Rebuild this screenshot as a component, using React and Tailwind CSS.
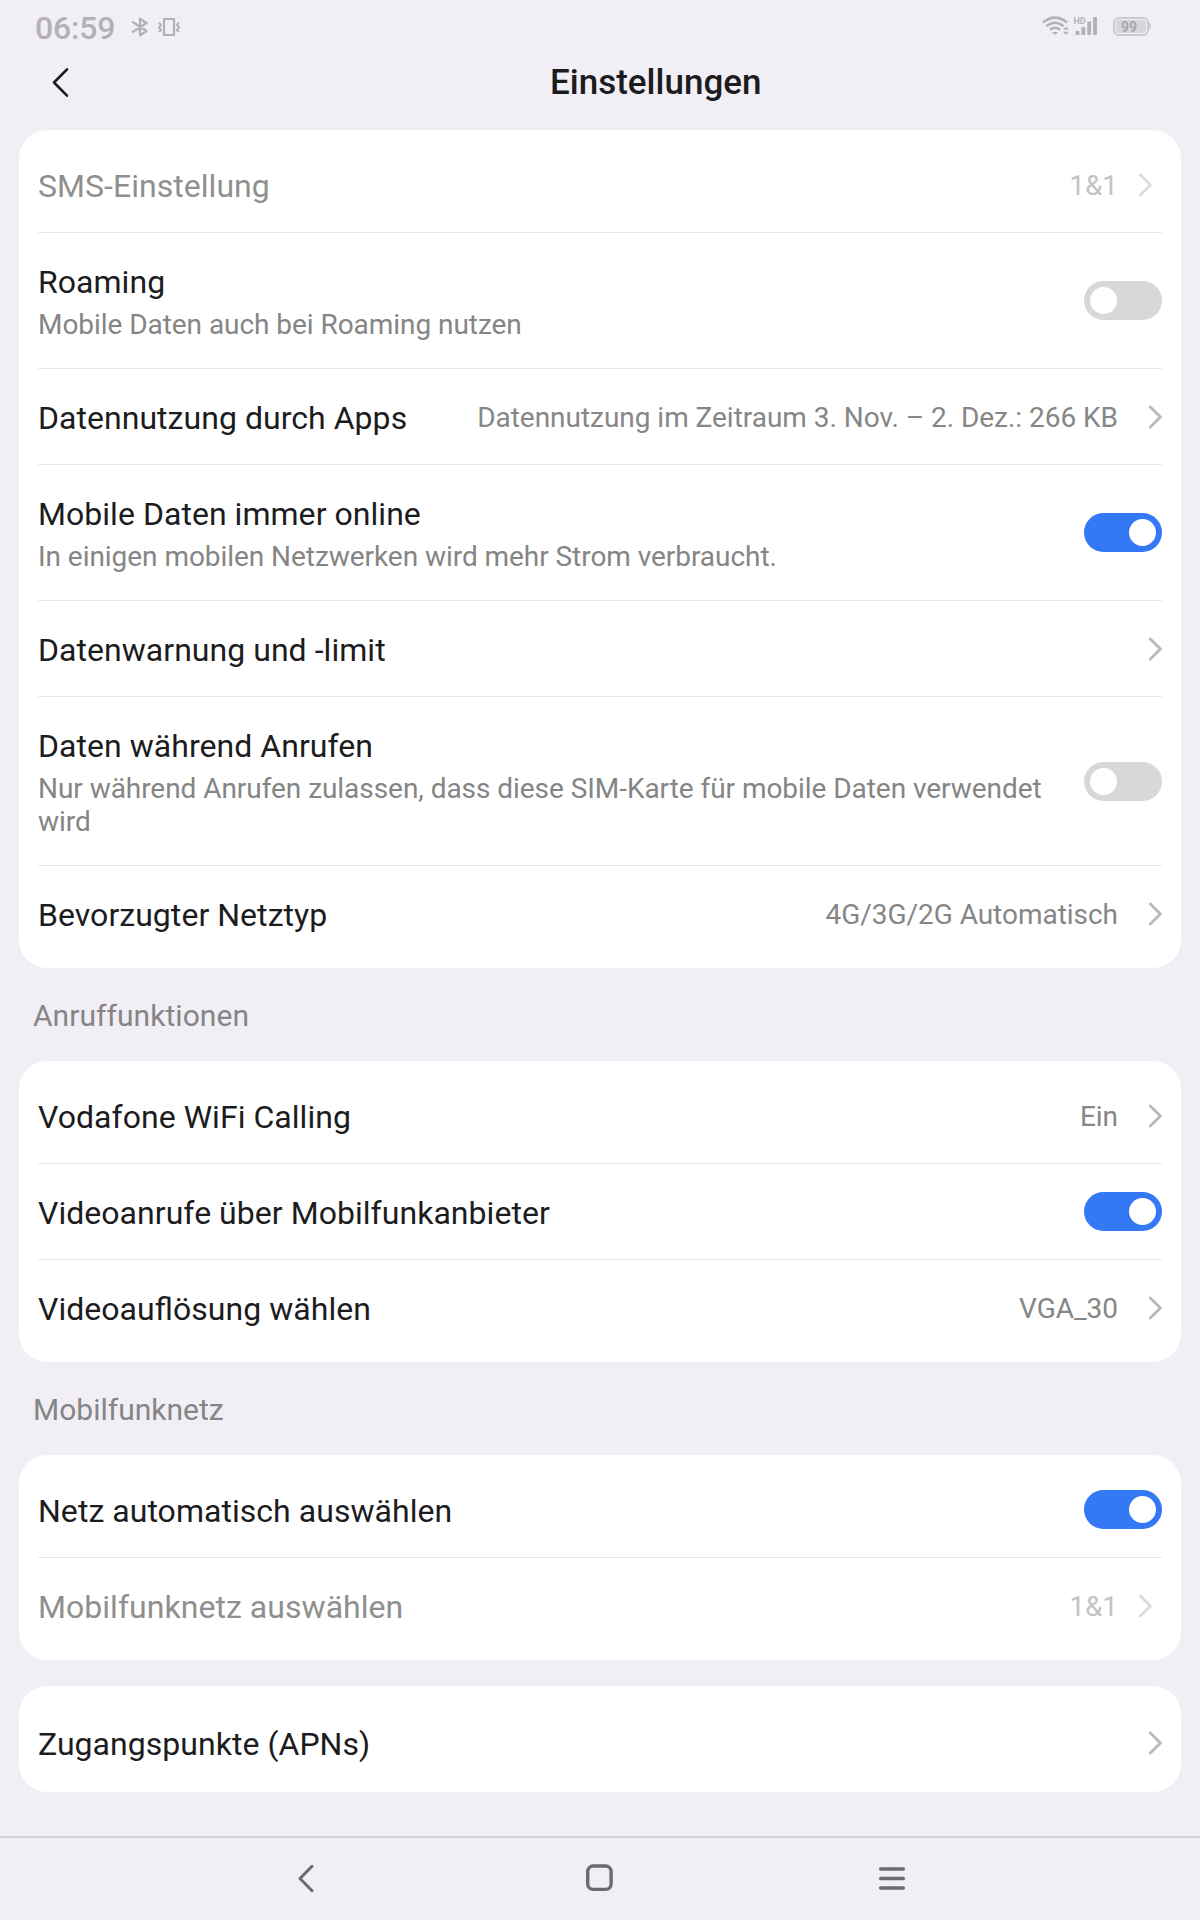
import React, { useState } from "react";

const mainSettings = [
  { id: "sms", title: "SMS-Einstellung", value: "1&1", disabled: true },
  { id: "roaming", title: "Roaming", text: "Mobile Daten auch bei Roaming nutzen", toggle: true },
  { id: "usage", title: "Datennutzung durch Apps", value: "Datennutzung im Zeitraum 3. Nov. – 2. Dez.: 266 KB" },
  { id: "online", title: "Mobile Daten immer online", text: "In einigen mobilen Netzwerken wird mehr Strom verbraucht.", toggle: true },
  { id: "limit", title: "Datenwarnung und -limit" },
  { id: "calls", title: "Daten während Anrufen", text: "Nur während Anrufen zulassen, dass diese SIM-Karte für mobile Daten verwendet wird", toggle: true },
  { id: "type", title: "Bevorzugter Netztyp", value: "4G/3G/2G Automatisch" },
];

const callSettings = [
  { id: "wificalling", title: "Vodafone WiFi Calling", value: "Ein" },
  { id: "video", title: "Videoanrufe über Mobilfunkanbieter", toggle: true },
  { id: "resolution", title: "Videoauflösung wählen", value: "VGA_30" },
];

const networkSettings = [
  { id: "auto", title: "Netz automatisch auswählen", toggle: true },
  { id: "select", title: "Mobilfunknetz auswählen", value: "1&1", disabled: true },
];

const apnSettings = [{ id: "apn", title: "Zugangspunkte (APNs)" }];

const Toggle = ({ on, onClick, label }) => (
  <button
    role="switch"
    aria-checked={on}
    aria-label={label}
    onClick={onClick}
    className={`flex h-[39px] w-[78px] shrink-0 items-center rounded-full px-1.5 ${
      on ? "justify-end bg-[#3478f6]" : "justify-start bg-[#d8d8d8]"
    }`}
  >
    <span className="size-[27px] rounded-full bg-white" />
  </button>
);

const Chevron = ({ disabled }) => (
  <svg
    width="14"
    height="24"
    viewBox="0 0 14 24"
    fill="none"
    strokeWidth="2.8"
    strokeLinecap="round"
    strokeLinejoin="round"
    className={`shrink-0 ${disabled ? "ml-5 mr-2.5 stroke-[#dcdcdc]" : "ml-[30px] stroke-[#b9b9b9]"}`}
  >
    <path d="M2.3 2 12.4 12 2.3 22" />
  </svg>
);

const Row = ({ item, on, onToggle }) => (
  <div className="flex items-center border-b border-[#e6e6e6] last:border-b-0">
    <div className="min-w-0 flex-1 pt-[30px] pb-[27px]">
      <h2 className={`text-[32px] leading-[38px] tracking-[0.04px] whitespace-nowrap [font-feature-settings:'liga'] ${item.disabled ? "text-[#8f8f8f]" : "text-[#1c1c1e]"}`}>
        {item.title}
      </h2>
      {item.text && (
        <p className="mt-[7px] pr-9 text-[28px] leading-[33px] tracking-[-0.05px] text-[#858585]">{item.text}</p>
      )}
    </div>
    {item.toggle ? (
      <Toggle on={on} onClick={onToggle} label={item.title} />
    ) : (
      <>
        <span className={`pt-0.5 text-[28px] leading-[33px] tracking-[-0.03px] whitespace-nowrap ${item.disabled ? "text-[#c3c3c3]" : "text-[#868686]"}`}>
          {item.value}
        </span>
        <Chevron disabled={item.disabled} />
      </>
    )}
  </div>
);

const StatusBar = () => (
  <div className="flex h-14 items-start justify-between pl-[35px] pr-[49px] text-[#b3b1b5]">
    <div className="flex items-center pt-2.5">
      <span className="text-[32px] leading-9 font-medium tracking-[-0.2px]">06:59</span>
      {/* bluetooth */}
      <svg width="18" height="20" viewBox="0 0 18 20" className="ml-4 -mt-0.5" fill="none" stroke="currentColor" strokeWidth="2.3" strokeLinejoin="round" strokeLinecap="round">
        <path d="M2 5.2 15.5 14 9 18.3V1.7L15.5 6 2 14.8" />
      </svg>
      {/* vibrate */}
      <svg width="24" height="20" viewBox="0 0 24 20" className="ml-2 -mt-0.5" fill="none" stroke="currentColor" strokeWidth="2.2">
        <path d="M7 2H17V18H7Z" />
        <path d="M2 5.5 4 8 2 10.5 4 13 2 15M22 5.5 20 8 22 10.5 20 13 22 15" strokeWidth="2" />
      </svg>
    </div>
    <div className="flex items-center pt-4">
      <svg width="56" height="20" viewBox="0 0 56 20" fill="none" stroke="currentColor" strokeWidth="2.5">
        <path d="M1 6.5Q13 -3.3 25 6.5M4.5 10.2Q13 3.3 21.5 10.2M8 13.7Q13 9.8 18 13.7" />
        <path d="M9.8 16 13 19 16.2 16ZM21 13.8 24 10.5 27 13.8ZM21 15.8 24 19 27 15.8Z" fill="currentColor" stroke="none" />
        <path d="M35.5 15V19M41.3 11V19M47.2 5.5V19M53 1V19" strokeWidth="3.8" />
        <text x="31.5" y="7.6" fontSize="9" fontWeight="700" fill="currentColor" stroke="none">HD</text>
      </svg>
      <div className="ml-[15px] flex items-center">
        <div className="flex h-[19px] w-9 rounded-md border-2 border-[#cbc9ce] p-px">
          <span className="flex flex-1 items-center justify-center rounded-[3px] bg-[#d8d6db] pt-px pr-1 text-[14px] leading-none font-bold text-[#aaa8ad]">
            99
          </span>
        </div>
        <span className="h-1.5 w-0.5 rounded-r-sm bg-[#cbc9ce]" />
      </div>
    </div>
  </div>
);

function App() {
  const [toggles, setToggles] = useState({
    roaming: false,
    online: true,
    calls: false,
    video: true,
    auto: true,
  });

  const handleToggle = (id) => {
    setToggles({ ...toggles, [id]: !toggles[id] });
  };

  const renderRows = (items) =>
    items.map((item) => (
      <Row key={item.id} item={item} on={toggles[item.id]} onToggle={() => handleToggle(item.id)} />
    ));

  return (
    <div className="flex h-[1920px] w-[1200px] flex-col overflow-hidden bg-[#f1eff5] font-['Roboto',sans-serif]">
      <StatusBar />

      <header className="flex h-[74px] items-start pl-[52px]">
        <button aria-label="Zurück" className="pt-[11px]">
          <svg width="18" height="31" viewBox="0 0 18 31" fill="none" stroke="#1c1c1e" strokeWidth="2.6" strokeLinecap="round" strokeLinejoin="round">
            <path d="M15 2.3 2 15.5 15 28.7" />
          </svg>
        </button>
        <h1 className="ml-[480px] pt-1.5 text-[35px] leading-[41px] font-medium text-[#1c1c1e]">Einstellungen</h1>
      </header>

      <main className="flex flex-1 flex-col px-[19px]">
        <section className="rounded-[28px] bg-white px-[19px] pt-[7px] pb-[7px]">{renderRows(mainSettings)}</section>

        <h3 className="flex h-[93px] items-center pt-0.5 pl-3.5 text-[30px] tracking-[0.05px] text-[#858585]">Anruffunktionen</h3>
        <section className="rounded-[28px] bg-white px-[19px] pt-[7px] pb-[7px]">{renderRows(callSettings)}</section>

        <h3 className="flex h-[93px] items-center pt-0.5 pl-3.5 text-[30px] text-[#858585]">Mobilfunknetz</h3>
        <section className="rounded-[28px] bg-white px-[19px] pt-[7px] pb-[7px]">{renderRows(networkSettings)}</section>

        <section className="mt-[26px] rounded-[28px] bg-white px-[19px] pt-[9px] pb-0.5">{renderRows(apnSettings)}</section>
      </main>

      <nav className="flex h-[84px] items-start border-t-2 border-[#d4d2d8] pt-[25px] pl-[297px]">
        <svg width="18" height="30" viewBox="0 0 18 30" fill="none" stroke="#6b6a6d" strokeWidth="3" strokeLinecap="round" strokeLinejoin="round">
          <path d="M15 3.3 3 15.5 15 27.7" />
        </svg>
        <svg width="30" height="30" viewBox="0 0 30 30" className="ml-[269px]" fill="none" stroke="#6b6a6d" strokeWidth="3.4">
          <rect x="3.7" y="3" width="23.4" height="23.4" rx="5.5" />
        </svg>
        <svg width="30" height="30" viewBox="0 0 30 30" className="ml-[263px]" stroke="#6b6a6d" strokeWidth="3.4" strokeLinecap="round">
          <path d="M3.6 6H26.4M3.6 15.5H26.4M3.6 25H26.4" />
        </svg>
      </nav>
    </div>
  );
}

export default App;
